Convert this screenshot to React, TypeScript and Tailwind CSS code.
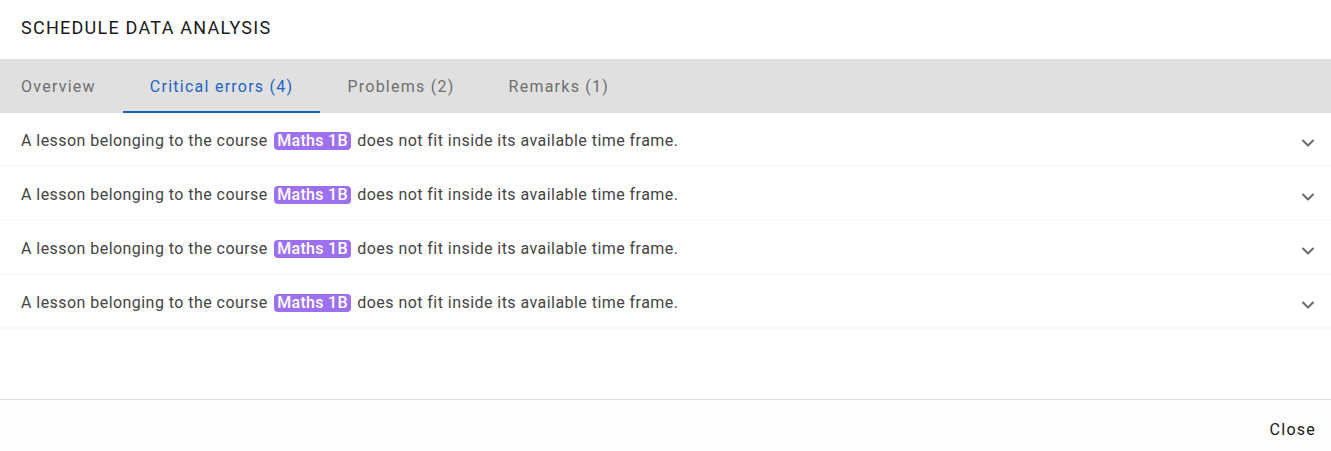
import { ChevronDown } from "lucide-react";

const tabs = [
    { label: "Overview", active: false },
    { label: "Critical errors (4)", active: true },
    { label: "Problems (2)", active: false },
    { label: "Remarks (1)", active: false },
];

const ErrorRow = () => (
    <div className="flex items-center justify-between h-[54px] pl-[21px] pr-[13px] border-b-2 border-[#f7f7f7]">
        <p className="text-[16px] text-[#444444] tracking-[0.45px] pt-[3px]">
            A lesson belonging to the course{" "}
            <span className="inline-block bg-[#9d70f2] text-white font-medium rounded-[4px] px-[3px] mx-[2px] leading-[18px] tracking-[0.3px]">Maths 1B</span>{" "}
            does not fit inside its available time frame.
        </p>
        <ChevronDown className="w-[20px] h-[20px] text-[#6b6b6b] mt-[8px]" strokeWidth={2.5} />
    </div>
);

export default function App() {
    return (
        <div className="w-[1331px] h-[451px] flex flex-col bg-white" style={{ fontFamily: "Roboto, 'Liberation Sans', sans-serif" }}>
            <div className="h-[59px] flex items-center pl-[21px]">
                <h1 className="text-[18px] tracking-[1.25px] text-[#1a1a1a] mb-[4px]">SCHEDULE DATA ANALYSIS</h1>
            </div>
            <div className="h-[54px] flex bg-[#e0e0e0]">
                {tabs.map((t, i) => (
                    <div
                        key={t.label}
                        className={
                            "flex items-center text-[16px] tracking-[1.25px] border-b-2 pt-[4px] " +
                            (i === 0 ? "pl-[21px] pr-[27px] " : "px-[27px] ") +
                            (t.active ? "text-[#1e63c4] border-[#1565c0]" : "text-[#6f6f6f] border-transparent")
                        }
                    >
                        {t.label}
                    </div>
                ))}
            </div>
            <div className="flex-1">
                <ErrorRow />
                <ErrorRow />
                <ErrorRow />
                <ErrorRow />
            </div>
            <div className="h-[52px] border-t border-[#e0e0e0] bg-[#fdfdfd] flex items-center justify-end pr-[15px] pt-[8px]">
                <button className="text-[16px] tracking-[1.25px] text-[#1a1a1a]">Close</button>
            </div>
        </div>
    );
}
